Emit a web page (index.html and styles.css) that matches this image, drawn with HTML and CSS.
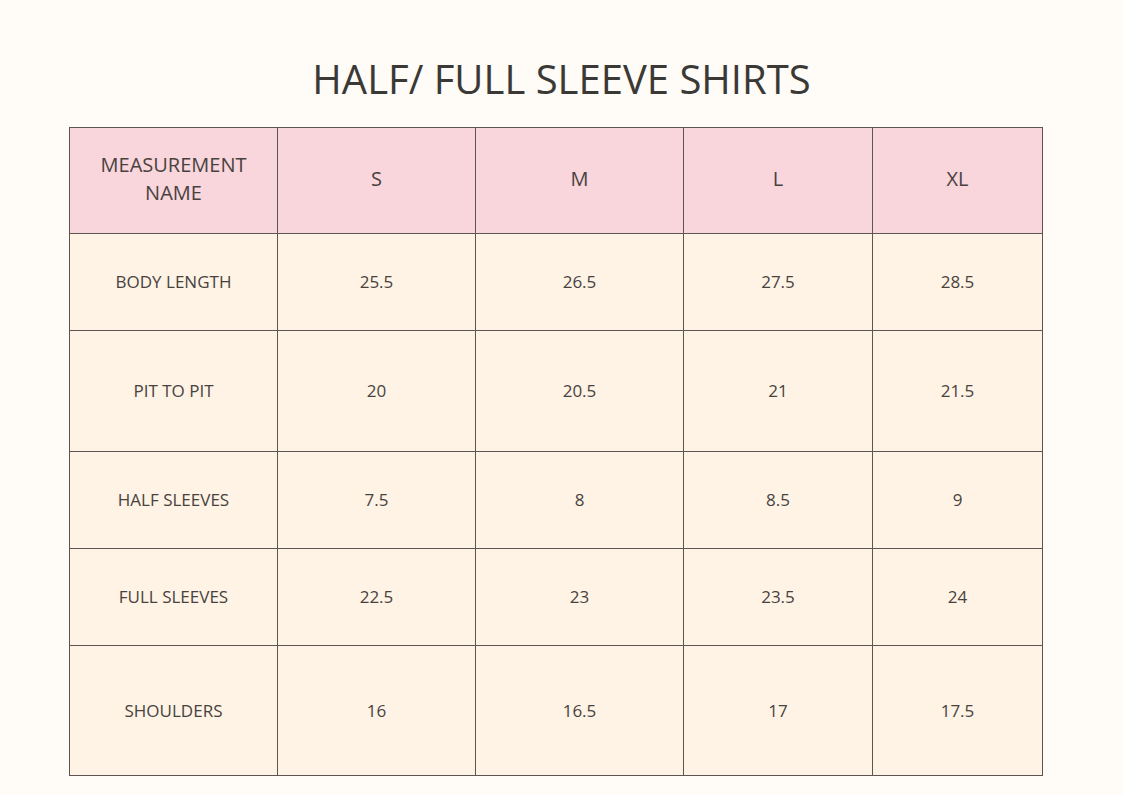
FILE: index.html
```html
<!DOCTYPE html>
<html>
<head>
<meta charset="utf-8">
<link rel="stylesheet" href="styles.css">
</head>
<body>
<main class="page">
  <h1 class="title">HALF/ FULL SLEEVE SHIRTS</h1>
  <table class="chart">
    <colgroup>
      <col class="c1"><col class="c2"><col class="c3"><col class="c4"><col class="c5">
    </colgroup>
    <thead>
      <tr class="r-head">
        <th>MEASUREMENT<br>NAME</th><th>S</th><th>M</th><th>L</th><th>XL</th>
      </tr>
    </thead>
    <tbody>
      <tr class="r1"><td>BODY LENGTH</td><td>25.5</td><td>26.5</td><td>27.5</td><td>28.5</td></tr>
      <tr class="r2"><td>PIT TO PIT</td><td>20</td><td>20.5</td><td>21</td><td>21.5</td></tr>
      <tr class="r3"><td>HALF SLEEVES</td><td>7.5</td><td>8</td><td>8.5</td><td>9</td></tr>
      <tr class="r4"><td>FULL SLEEVES</td><td>22.5</td><td>23</td><td>23.5</td><td>24</td></tr>
      <tr class="r5"><td>SHOULDERS</td><td>16</td><td>16.5</td><td>17</td><td>17.5</td></tr>
    </tbody>
  </table>
</main>
</body>
</html>
```

FILE: styles.css
```css
html, body {
  margin: 0;
  padding: 0;
  background: #fffbf6;
}
body {
  font-family: "Open Sans", "Noto Sans", sans-serif;
  color: #3f3c39;
}
.page {
  width: 1123px;
  height: 794px;
  padding-top: 55px;
  box-sizing: border-box;
}
.title {
  margin: 0;
  font-size: 40px;
  font-weight: 400;
  line-height: 48px;
  text-align: center;
  color: #3b3936;
}
.chart {
  margin: 24px 0 0 69px;
  border-collapse: collapse;
  table-layout: fixed;
  width: 973px;
  border: 1.5px solid #8e8884;
}
.c1 { width: 208px; }
.c2 { width: 198px; }
.c3 { width: 208px; }
.c4 { width: 189px; }
.c5 { width: 170px; }
.chart th, .chart td {
  border: 1.5px solid #5d5553;
  text-align: center;
  vertical-align: middle;
  padding: 0;
}
.chart th {
  background: #f9d5dc;
  font-weight: 400;
  font-size: 20px;
  line-height: 28px;
  color: #48423f;
  padding-bottom: 3px;
}
.chart td {
  background: #fef3e4;
  font-size: 17px;
  color: #48423f;
  padding-bottom: 1px;
}
.r-head { height: 106px; }
.r1 { height: 97px; }
.r2 { height: 121px; }
.r3 { height: 97px; }
.r4 { height: 97px; }
.r5 { height: 130px; }
```
